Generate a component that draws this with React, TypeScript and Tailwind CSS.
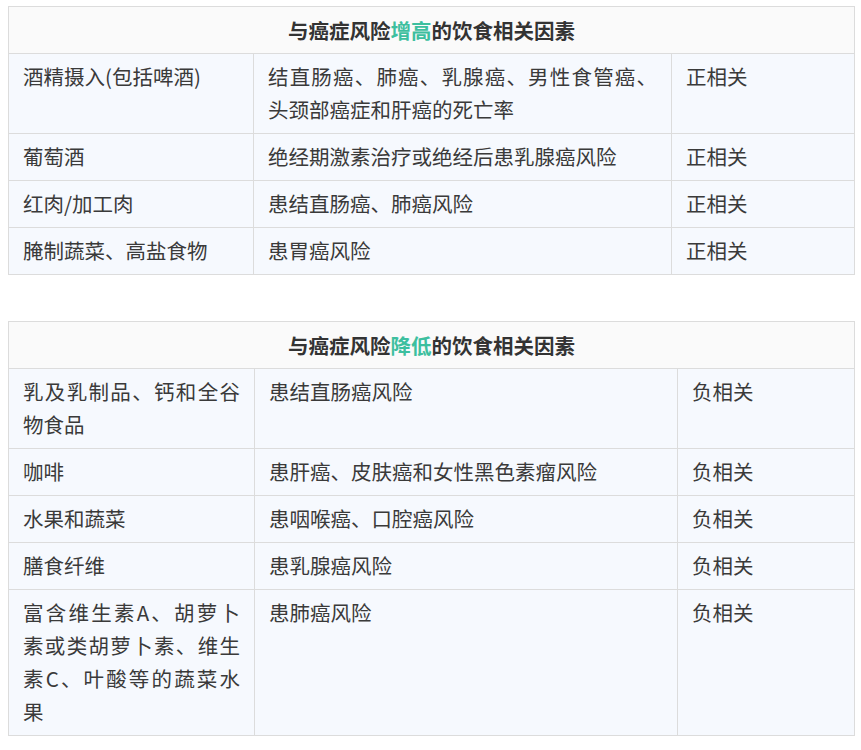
const up: [string, string, string][] = [
  ['酒精摄入(包括啤酒)', '结直肠癌、肺癌、乳腺癌、男性食管癌、头颈部癌症和肝癌的死亡率', '正相关'],
  ['葡萄酒', '绝经期激素治疗或绝经后患乳腺癌风险', '正相关'],
  ['红肉/加工肉', '患结直肠癌、肺癌风险', '正相关'],
  ['腌制蔬菜、高盐食物', '患胃癌风险', '正相关'],
];
const down: [string, string, string][] = [
  ['乳及乳制品、钙和全谷物食品', '患结直肠癌风险', '负相关'],
  ['咖啡', '患肝癌、皮肤癌和女性黑色素瘤风险', '负相关'],
  ['水果和蔬菜', '患咽喉癌、口腔癌风险', '负相关'],
  ['膳食纤维', '患乳腺癌风险', '负相关'],
  ['富含维生素A、胡萝卜素或类胡萝卜素、维生素C、叶酸等的蔬菜水果', '患肺癌风险', '负相关'],
];

function Table({ word, rows, cols }: { word: string; rows: [string, string, string][]; cols: string }) {
  return (
    <table className="w-[846px] border-collapse table-fixed text-[20.5px] leading-[33px] text-[#3a3a3a]">
      <colgroup>
        {cols.split(',').map((w, i) => <col key={i} style={{ width: w + 'px' }} />)}
      </colgroup>
      <thead>
        <tr>
          <th colSpan={3} className="border border-[#dcdcdc] bg-[#fafafa] h-[47px] p-0 font-bold text-[#333] text-center">
            与癌症风险<span className="text-[#3dbf9f]">{word}</span>的饮食相关因素
          </th>
        </tr>
      </thead>
      <tbody>
        {rows.map((r, i) => (
          <tr key={i} className="bg-[#f6f9fe]">
            {r.map((c, j) => (
              <td key={j} className="border border-[#dcdcdc] align-top px-[14px] pt-[6px] pb-[7px] text-justify">{c}</td>
            ))}
          </tr>
        ))}
      </tbody>
    </table>
  );
}

export default function App() {
  return (
    <div className="bg-white w-[861px] h-[750px] overflow-hidden pl-[8px] pt-[6px] flex flex-col gap-[46px]" style={{ fontFamily: '"Noto Sans CJK SC", "Liberation Sans", sans-serif' }}>
      <Table word="增高" rows={up} cols="245,418,183" />
      <Table word="降低" rows={down} cols="246,423,177" />
    </div>
  );
}
